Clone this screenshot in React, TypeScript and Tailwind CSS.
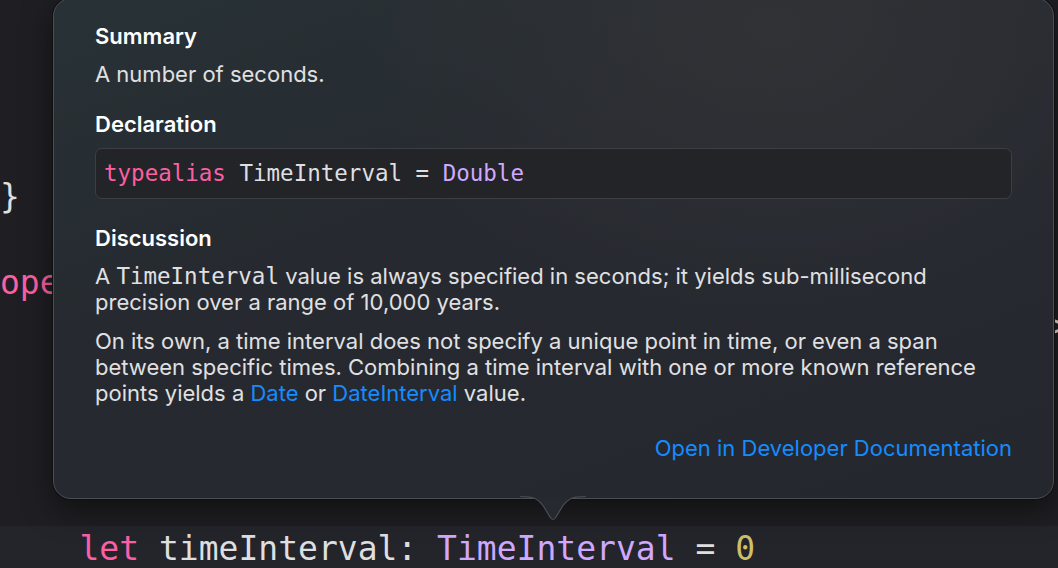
import React from 'react';

const sans = "font-['Inter','Noto_Sans',sans-serif]";
const mono = "font-['DejaVu_Sans_Mono','Liberation_Mono',monospace]";

const Arrow: React.FC = () => (
  <svg
    className="absolute left-[467px] top-[498px]"
    width="66"
    height="28"
    viewBox="0 0 66 28"
  >
    <path
      d="M0 0.5 C 13 0.5, 17 2, 23 9.5 L 30 21 Q 33 26 36 21 L 43 9.5 C 49 2, 53 0.5, 66 0.5"
      fill="#262a30"
      stroke="#4b4e54"
      strokeWidth="1.2"
    />
    <rect x="0" y="-2" width="66" height="2.2" fill="#262a30" />
  </svg>
);

const App: React.FC = () => {
  return (
    <div className="relative w-[1058px] h-[568px] overflow-hidden bg-[#1f1f23]">
      {/* editor underneath */}
      <div className={`flex flex-col h-full ${mono} text-[33px] leading-[43px] text-[#dfdfe0] whitespace-pre`}>
        <div className="mt-[175px] h-[43px]">{'}'}</div>
        <div className="mt-[43px] h-[43px] text-[#fc5fa3]">ope</div>
        <div className="h-[43px] pl-[1050px]">{'>'}</div>
        <div className="mt-auto h-[42px] bg-[#23252b] leading-[46px]">
          {'    '}
          <span className="text-[#fc5fa3]">let</span> timeInterval: <span className="text-[#d0a8ff]">TimeInterval</span> = <span className="text-[#d0bf69]">0</span>
        </div>
      </div>

      {/* quick help popover */}
      <div className="absolute left-[53px] top-[-2px] w-[1001px] h-[501px]">
        <div
          className={`h-full rounded-[18px] border border-[#4b4e54] shadow-[0_0_0_1px_#101012,0_10px_30px_rgba(0,0,0,0.5)] bg-[#262a30] bg-[radial-gradient(ellipse_420px_300px_at_72%_6%,#313236_0%,rgba(38,42,48,0)_100%),linear-gradient(160deg,#283236_0%,#262a30_40%,#25272e_100%)] px-[41px] pt-[24px] ${sans} text-[22px] leading-[26px] text-[#e0e0e2]`}
        >
          <div className="font-semibold text-white">Summary</div>
          <div className="mt-[12px]">A number of seconds.</div>

          <div className="mt-[24px] font-semibold text-white">Declaration</div>
          <div className={`mt-[11px] h-[51px] rounded-[7px] border border-[#3c3e43] bg-[#232428] flex items-center pl-[8px] pb-[1px] ${mono} text-[22.5px] text-[#dfdfe0] whitespace-pre`}>
            <span className="text-[#fc5fa3]">typealias</span> TimeInterval = <span className="text-[#d0a8ff]">Double</span>
          </div>

          <div className="mt-[26px] font-semibold text-white">Discussion</div>
          <p className="mt-[12px] whitespace-nowrap">
            A <span className={`${mono} text-[22.5px]`}>TimeInterval</span> value is always specified in seconds; it yields sub-millisecond
            <br />
            precision over a range of 10,000 years.
          </p>
          <p className="mt-[13px] whitespace-nowrap">
            On its own, a time interval does not specify a unique point in time, or even a span
            <br />
            between specific times. Combining a time interval with one or more known reference
            <br />
            points yields a <span className="text-[#148cff]">Date</span> or <span className="text-[#148cff]">DateInterval</span> value.
          </p>

          <div className="mt-[29px] flex justify-end">
            <span className="text-[#148cff]">Open in Developer Documentation</span>
          </div>
        </div>
        <Arrow />
      </div>
    </div>
  );
};

export default App;
